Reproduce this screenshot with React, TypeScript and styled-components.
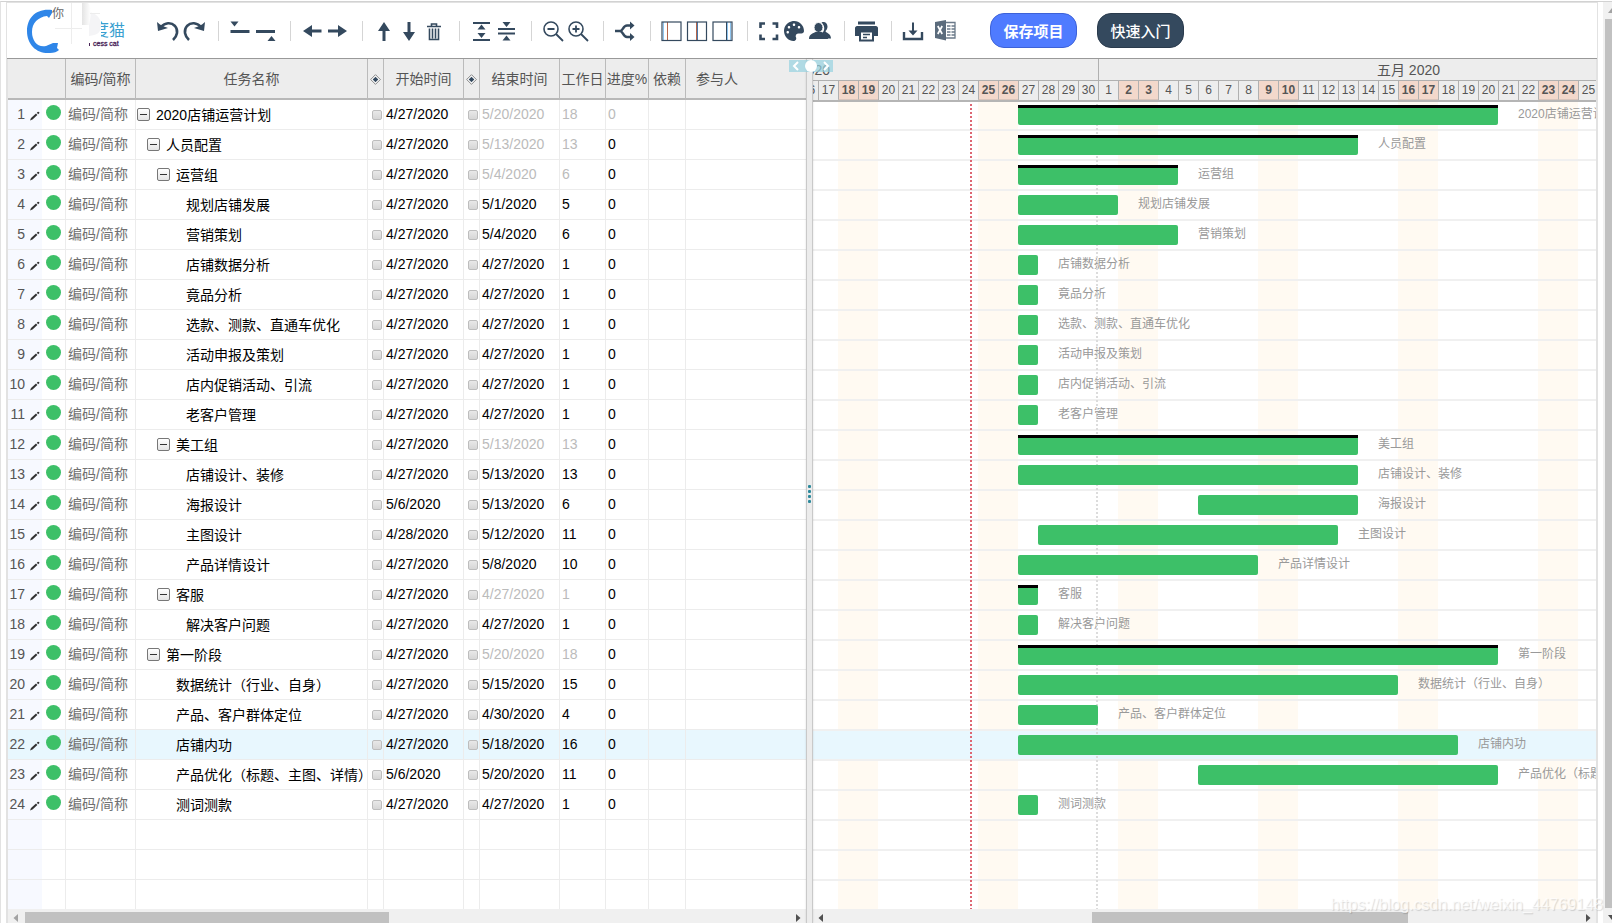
import React from "react";
import styled, { createGlobalStyle, css } from "styled-components";
import { FaPalette } from "react-icons/fa";

const INK = "#34495e";
const GREEN = "#3dc068";
const DAY = 20;
const ROW = 30;

const GlobalStyle = createGlobalStyle`
  *, *::before, *::after { box-sizing: border-box; }
  html { overflow: hidden; }
  body {
    margin: 0;
    background: #fff;
    color: #000;
    font-family: "Liberation Sans", "Noto Sans CJK SC", sans-serif;
    font-size: 14px;
  }
  button { font: inherit; padding: 0; border: 0; background: none; cursor: pointer; }
`;

/* ---------- data ---------- */

type Task = {
  name: string;
  level: number;
  group?: boolean;
  start: string;
  end: string;
  days: number;
  locked?: boolean;
};

const tasks: Task[] = [
  { name: "2020店铺运营计划", level: 0, group: true, start: "4/27", end: "5/20", days: 18, locked: true },
  { name: "人员配置", level: 1, group: true, start: "4/27", end: "5/13", days: 13 },
  { name: "运营组", level: 2, group: true, start: "4/27", end: "5/4", days: 6 },
  { name: "规划店铺发展", level: 3, start: "4/27", end: "5/1", days: 5 },
  { name: "营销策划", level: 3, start: "4/27", end: "5/4", days: 6 },
  { name: "店铺数据分析", level: 3, start: "4/27", end: "4/27", days: 1 },
  { name: "竟品分析", level: 3, start: "4/27", end: "4/27", days: 1 },
  { name: "选款、测款、直通车优化", level: 3, start: "4/27", end: "4/27", days: 1 },
  { name: "活动申报及策划", level: 3, start: "4/27", end: "4/27", days: 1 },
  { name: "店内促销活动、引流", level: 3, start: "4/27", end: "4/27", days: 1 },
  { name: "老客户管理", level: 3, start: "4/27", end: "4/27", days: 1 },
  { name: "美工组", level: 2, group: true, start: "4/27", end: "5/13", days: 13 },
  { name: "店铺设计、装修", level: 3, start: "4/27", end: "5/13", days: 13 },
  { name: "海报设计", level: 3, start: "5/6", end: "5/13", days: 6 },
  { name: "主图设计", level: 3, start: "4/28", end: "5/12", days: 11 },
  { name: "产品详情设计", level: 3, start: "4/27", end: "5/8", days: 10 },
  { name: "客服", level: 2, group: true, start: "4/27", end: "4/27", days: 1 },
  { name: "解决客户问题", level: 3, start: "4/27", end: "4/27", days: 1 },
  { name: "第一阶段", level: 1, group: true, start: "4/27", end: "5/20", days: 18 },
  { name: "数据统计（行业、自身）", level: 2, start: "4/27", end: "5/15", days: 15 },
  { name: "产品、客户群体定位", level: 2, start: "4/27", end: "4/30", days: 4 },
  { name: "店铺内功", level: 2, start: "4/27", end: "5/18", days: 16 },
  { name: "产品优化（标题、主图、详情）", level: 2, start: "5/6", end: "5/20", days: 11 },
  { name: "测词测款", level: 2, start: "4/27", end: "4/27", days: 1 },
];

const SELECTED = 21;
const BLANK_ROWS = 3;

/* the timeline runs from April 16th to May 31st */
const FIRST_DAY = 16;
const APRIL_DAYS = 30 - FIRST_DAY + 1;
const TOTAL_DAYS = APRIL_DAYS + 31;

const column = (date: string) => {
  const [month, day] = date.split("/").map(Number);
  return month === 4 ? day - FIRST_DAY + 1 : day + APRIL_DAYS;
};

const timeline = Array.from({ length: TOTAL_DAYS }, (_, i) => ({
  day: i < APRIL_DAYS ? i + FIRST_DAY : i - APRIL_DAYS + 1,
  weekend: i % 7 === 2 || i % 7 === 3,
}));

/* ---------- page ---------- */

const Page = styled.div`
  display: flex;
  margin-top: 1px;
  border-top: 1px solid #d2d2d2;
  border-left: 1px solid #e2e2e2;
  min-height: calc(100vh - 1px);
`;

const Frame = styled.main`
  flex: 1;
  min-width: 0;
  margin: 0 5px;
  border: 1px solid #e2e2e2;
  border-bottom: 0;
  display: flex;
  flex-direction: column;
`;

const PageScroll = styled.div`
  width: 9px;
  display: flex;
  flex-direction: column;
  background: #f1f1f1;
`;

const PageThumb = styled.div`
  flex: 1;
  margin-left: 2px;
  background: #c1c1c1;
`;

const Arrow = styled.svg<{ $muted?: boolean }>`
  display: block;
  flex: none;
  fill: ${(p) => (p.$muted ? "#a3a3a3" : "#505050")};
`;

/* ---------- toolbar ---------- */

const Toolbar = styled.header`
  display: flex;
  align-items: center;
  height: 56px;
  border-bottom: 1px solid #999;
`;

const Logo = styled.a`
  display: block;
  width: 130px;
  height: 55px;
  margin-right: 19px;
`;

const Tool = styled.button`
  width: 25px;
  height: 25px;
  color: ${INK};
  svg { display: block; }
`;

const Rule = styled.span`
  width: 1px;
  height: 20px;
  margin: 0 9px 0 12px;
  background: #d5d5d5;
`;

const Spacer = styled.span`
  width: 7px;
`;

const Action = styled.button<{ $primary?: boolean }>`
  width: 87px;
  height: 35px;
  padding-bottom: 1px;
  border-radius: 14px;
  color: #fff;
  font-size: 15px;
  font-weight: ${(p) => (p.$primary ? 700 : 500)};
  background: ${(p) => (p.$primary ? "#4f7bff" : INK)};
  border: 1px solid ${(p) => (p.$primary ? "#3d62d8" : "#2a3b4d")};
  margin-left: ${(p) => (p.$primary ? 32 : 20)}px;
`;

/* ---------- task table ---------- */

const Workspace = styled.div`
  flex: 1;
  display: flex;
  border: solid #e2e2e2;
  border-width: 0 1px;
`;

const TablePane = styled.section`
  flex: 0 0 798px;
  display: flex;
  flex-direction: column;
`;

const Table = styled.table`
  width: 100%;
  table-layout: fixed;
  border-collapse: separate;
  border-spacing: 0;
`;

const Head = styled.th<{ $left?: boolean }>`
  height: 41px;
  padding: 0 0 2px ${(p) => (p.$left ? 10 : 0)}px;
  text-align: ${(p) => (p.$left ? "left" : "center")};
  white-space: nowrap;
  font-weight: 400;
  color: #555;
  background: #ededed;
  border-right: 1px solid #bbb;
  border-bottom: 2px solid #b8b8b8;
  &:last-child { border-right: 0; }
  svg { display: block; margin: 4px auto 0 2px; }
`;

const TaskRow = styled.tr<{ $selected?: boolean }>`
  background: ${(p) => (p.$selected ? "#e8f7fe" : "#fff")};
  &:last-child td { height: 29px; border-bottom: 0; }
`;

const Cell = styled.td<{ $tone?: "muted" | "code" }>`
  height: ${ROW}px;
  padding: 0 0 2px 2px;
  line-height: 20px;
  white-space: nowrap;
  color: ${(p) => (p.$tone === "muted" ? "#bbb" : p.$tone === "code" ? "#707070" : "#000")};
  border-right: 1px solid #ececec;
  border-bottom: 1px solid #ececec;
  &:last-child { border-right: 0; }
`;

const IndexCell = styled(Cell)<{ $selected?: boolean }>`
  padding: 0;
  color: #555;
  background: ${(p) => (p.$selected ? "transparent" : "linear-gradient(90deg, #f7f9ff 34px, transparent 34px)")};
`;

const NameCell = styled(Cell)`
  padding: 0 0 0 1px;
`;

const TickCell = styled(Cell)`
  padding: 0 0 0 4px;
`;

const IndexLine = styled.div`
  display: flex;
  align-items: center;
  height: 28px;
  padding-bottom: 2px;
`;

const RowNumber = styled.span`
  width: 17px;
  text-align: right;
`;

const EditButton = styled.button`
  width: 10px;
  height: 10px;
  margin: 4px 6px 0 5px;
  svg { display: block; }
`;

const Status = styled.span`
  width: 15px;
  height: 15px;
  margin-bottom: 2px;
  border-radius: 50%;
  background: ${GREEN};
`;

const NameLine = styled.div<{ $indent: number }>`
  display: flex;
  align-items: center;
  gap: 6px;
  height: 28px;
  padding-left: ${(p) => p.$indent}px;
`;

const Toggle = styled.button`
  width: 13px;
  height: 13px;
  flex: none;
  display: flex;
  align-items: center;
  justify-content: center;
  border: 1px solid #777;
  border-radius: 2px;
  background: linear-gradient(#fff, #e4e4e4);
  &::after {
    content: "";
    width: 7px;
    height: 1px;
    background: #333;
  }
`;

const Tick = styled.input`
  appearance: none;
  display: block;
  width: 10px;
  height: 10px;
  margin: 0;
  border: 1px solid #bdbdbd;
  border-radius: 2px;
  background: linear-gradient(#e8e8e8, #d6d6d6);
`;

const ScrollTrack = styled.div`
  display: flex;
  height: 14px;
  margin-top: auto;
  background: #f0f0f0;
  padding-top: 3px;
`;

const ScrollThumb = styled.div<{ $size: number }>`
  flex: ${(p) => p.$size} 1 0;
  background: #c1c1c1;
`;

const ScrollGap = styled.div<{ $size: number }>`
  flex: ${(p) => p.$size} 1 0;
`;

/* ---------- splitter ---------- */

const Splitter = styled.div`
  position: relative;
  z-index: 3;
  flex: 0 0 7px;
  display: flex;
  align-items: center;
  justify-content: center;
  background: #ececec;
  border: solid #c9c9c9;
  border-width: 0 1px;
  box-shadow: 0 0 2px rgba(0, 0, 0, 0.15);
`;

const Grip = styled.div`
  display: grid;
  gap: 2px;
  padding-top: 6px;
  span {
    width: 3px;
    height: 3px;
    border-radius: 1px;
    background: #2c8a9c;
  }
`;

const PaneSwitch = styled.div`
  position: absolute;
  top: 1px;
  left: 50%;
  width: 44px;
  height: 12px;
  margin-left: -21px;
  display: flex;
  align-items: center;
  justify-content: space-between;
  background: rgba(150, 210, 224, 0.7);
  button { width: 14px; height: 12px; }
  svg { display: block; margin: auto; }
  i {
    width: 12px;
    height: 12px;
    border-radius: 50%;
    background: #fff;
  }
`;

/* ---------- gantt chart ---------- */

const ChartPane = styled.section`
  flex: 1;
  min-width: 0;
  display: flex;
  flex-direction: column;
  overflow: hidden;
`;

/* the chart is scrolled most of a day past April 16th */
const Scrolled = styled.div`
  width: ${TOTAL_DAYS * DAY}px;
  margin-left: -15px;
`;

const ChartHead = styled.div`
  position: relative;
  z-index: 1;
  background: #ededed;
  color: #555;
  border-bottom: 1px solid #b5b5b5;
  box-shadow: 0 1px 0 #b5b5b5;
`;

const Months = styled.div`
  display: grid;
  grid-template-columns: ${APRIL_DAYS * DAY}px ${31 * DAY}px;
  height: 22px;
  line-height: 22px;
  text-align: center;
  border-bottom: 1px solid #b0b0b0;
`;

const Month = styled.span<{ $centredOnStart?: boolean }>`
  border-left: 1px solid #b0b0b0;
  ${(p) =>
    p.$centredOnStart &&
    css`
      text-align: left;
      text-indent: -32px;
    `}
`;

const Days = styled.div`
  display: grid;
  grid-template-columns: repeat(${TOTAL_DAYS}, ${DAY}px);
  height: 19px;
`;

const Day = styled.span<{ $weekend: boolean }>`
  font-size: 12px;
  line-height: 18px;
  text-align: center;
  border-left: 1px solid #b0b0b0;
  ${(p) =>
    p.$weekend &&
    css`
      font-weight: 700;
      background: #f3d8cb;
      border-bottom: 1px solid #d8c4bb;
    `}
`;

const ChartBody = styled.div`
  position: relative;
  background: repeating-linear-gradient(
    90deg,
    transparent 0 40px,
    #fffaf2 40px 80px,
    transparent 80px 140px
  );
`;

const Marker = styled.div<{ $left: number; $color: string }>`
  position: absolute;
  top: 3px;
  bottom: 0;
  left: ${(p) => p.$left}px;
  width: 2px;
  background: repeating-linear-gradient(${(p) => p.$color} 0 2px, transparent 2px 4px);
`;

const ChartRow = styled.div<{ $selected?: boolean }>`
  display: grid;
  grid-template-columns: repeat(${TOTAL_DAYS}, ${DAY}px);
  align-items: start;
  height: ${ROW}px;
  padding-top: 4px;
  border-bottom: 2px solid #f0f0f0;
  background: ${(p) => (p.$selected ? "#e8f7fe" : "transparent")};
  &:last-child { height: 28px; border-bottom: 0; }
`;

const Bar = styled.div<{ $from: number; $to: number; $group?: boolean }>`
  position: relative;
  grid-row: 1;
  grid-column: ${(p) => p.$from} / ${(p) => p.$to + 1};
  height: 20px;
  border-radius: 2px;
  background: ${GREEN};
  ${(p) =>
    p.$group &&
    css`
      border-top: 3px solid #000;
      border-radius: 0 0 2px 2px;
    `}
`;

const BarLabel = styled.span<{ $from: number }>`
  grid-row: 1;
  grid-column: ${(p) => p.$from} / span 1;
  font-size: 12px;
  line-height: 18px;
  white-space: nowrap;
  color: #999;
`;

const Watermark = styled.div`
  position: absolute;
  z-index: 4;
  right: 9px;
  top: 895px;
  font-size: 16px;
  line-height: 20px;
  color: rgba(255, 255, 255, 0.7);
  text-shadow: 1px 1px 1px rgba(0, 0, 0, 0.15);
  pointer-events: none;
`;

/* ---------- icons ---------- */

const Icon = ({ children }: { children: React.ReactNode }) => (
  <svg width="25" height="25" viewBox="0 0 25 25" fill="currentColor" aria-hidden="true">
    {children}
  </svg>
);

const line = { fill: "none", stroke: "currentColor", strokeWidth: 2 };

const icons: Record<string, React.ReactNode> = {
  撤销: (
    <>
      <path d="M1 4l1 9 10-3-4-1.500-4-2z" />
      <path d="M5 9C9 4.500 15 3.800 19 8C22.500 12 21.500 18 17 22" {...line} strokeWidth="2.600" />
    </>
  ),
  重做: (
    <>
      <path d="M24 4l-1 9-10-3 4-1.500 4-2z" />
      <path d="M20 9C16 4.500 10 3.800 6 8C2.500 12 3.500 18 8 22" {...line} strokeWidth="2.600" />
    </>
  ),
  上方插入: (
    <>
      <path d="M2.500 3.500h8l-4 5z" />
      <path d="M2.500 12h19v3h-19z" />
    </>
  ),
  下方插入: (
    <>
      <path d="M3 12h19v3H3z" />
      <path d="M14.500 23h8l-4-5z" />
    </>
  ),
  升级: <path d="M3 13l9-6v4.500h9.500v3H12V19z" />,
  降级: <path d="M22 13l-9-6v4.500H3v3h10V19z" />,
  上移: <path d="M12 4l6 9h-4.500v10h-3V13H6z" />,
  下移: <path d="M12 23l6-9h-4.500V4h-3v10H6z" />,
  删除: (
    <path
      d="M5 8.500h14M9.500 8.500V6h5v2.500M7.500 10.500v11h9v-11M10.500 10.500v10M13.500 10.500v10"
      {...line}
      strokeWidth="1.600"
    />
  ),
  全部展开: (
    <>
      <path d="M4 4h17v2H4zM4 21h17v2H4z" />
      <path d="M12.500 6.500l4 5h-8zM12.500 20l4-5h-8z" />
    </>
  ),
  全部收起: (
    <>
      <path d="M4 10h17v2H4zM4 14.500h17v2H4z" />
      <path d="M12.500 9l4-5h-8zM12.500 17.500l4 5h-8z" />
    </>
  ),
  缩小: (
    <>
      <circle cx="10" cy="11" r="7" {...line} strokeWidth="1.600" />
      <path d="M15 16l7 7M6.500 11h7" {...line} strokeWidth="1.800" />
    </>
  ),
  放大: (
    <>
      <circle cx="10" cy="11" r="7" {...line} strokeWidth="1.600" />
      <path d="M15 16l7 7M6.500 11h7M10 7.500v7" {...line} strokeWidth="1.800" />
    </>
  ),
  关键路径: (
    <>
      <path d="M2 13h5c3 0 3-5.500 7-5.500h4M7 13c3 0 3 6 7 6h4" {...line} strokeWidth="2.500" />
      <path d="M17 3.500l4.500 4-4.500 4zM17 15l4.500 4-4.500 4z" />
    </>
  ),
  左栏: (
    <>
      <path d="M7.500 4v18" stroke="#b5654a" strokeWidth="1" />
      <path d="M3.500 4v18" stroke="#8fc4ee" strokeWidth="1" />
      <rect x="2" y="4" width="19" height="18.500" {...line} strokeWidth="1.200" />
    </>
  ),
  中栏: (
    <>
      <path d="M11.500 4v18" stroke="#b5654a" strokeWidth="1" />
      <path d="M12.500 4v18" stroke="#4a78a8" strokeWidth="1" />
      <rect x="2.500" y="4" width="19" height="18.500" {...line} strokeWidth="1.200" />
    </>
  ),
  右栏: (
    <>
      <path d="M16.500 4v18" stroke={INK} strokeWidth="1" />
      <path d="M17.500 4v18M20.500 4v18" stroke="#8fc4ee" strokeWidth="1" />
      <rect x="3" y="4" width="19" height="18.500" {...line} strokeWidth="1.200" />
    </>
  ),
  全屏: <path d="M3.500 10V5.500H8M15.500 5.500H20V10M20 16.500V21h-4.500M8 21H3.500v-4.500" {...line} strokeWidth="2.600" />,
  颜色: <FaPalette x="2" y="3" size={20} />,
  成员: (
    <>
      <path d="M14.500 4.500c3-1.500 6 .5 6 4 0 2-1 3.500-2 4.500 0 2 5.500 2 5.500 7.500h-3.500c-1-3-2.500-4.500-5-5.500 2.500-3 2.500-7-1-10.500z" />
      <ellipse cx="11.500" cy="9.500" rx="4.500" ry="5" stroke="#fff" />
      <path d="M2 21c0-5 4-5.500 6.500-7h6c3 1.500 6.500 2 6.500 7z" />
    </>
  ),
  打印: (
    <>
      <path d="M4 3.500h17v3H4zM3 8h19c1 0 2 1 2 2v8h-4v-4H5v4H1v-8c0-1 1-2 2-2z" />
      <path d="M6 13.500h13v9H6z" {...line} />
      <path d="M9 16.500h7M9 19.500h4" {...line} strokeWidth="1.500" />
    </>
  ),
  导出: (
    <>
      <path d="M3 14v7h18v-7" {...line} strokeWidth="2.400" />
      <path d="M11 4.500h2v8h3.500L12 17.500 7.500 12.500H11z" />
    </>
  ),
};

const toolGroups = [
  ["撤销", "重做"],
  ["上方插入", "下方插入"],
  ["升级", "降级"],
  ["上移", "下移", "删除"],
  ["全部展开", "全部收起"],
  ["缩小", "放大"],
  ["关键路径"],
  ["左栏", "中栏", "右栏"],
  ["全屏", "颜色", "成员"],
  ["打印"],
  ["导出"],
];

const ExcelIcon = () => (
  <svg width="25" height="25" viewBox="0 0 25 25" aria-hidden="true">
    <path d="M2 4l11-2v20.500L2 20z" fill="#5b6b7c" />
    <path d="M4.800 8l4.400 8M9.200 8l-4.400 8" stroke="#fff" strokeWidth="1.700" fill="none" />
    <path
      d="M13 4.500h9v15.500h-9M14 8h3.500M18.500 8h3M14 11h3.500M18.500 11h3M14 14h3.500M18.500 14h3M14 17h3.500M18.500 17h3"
      stroke="#6b7a89"
      strokeWidth="1.300"
      fill="none"
    />
  </svg>
);

const Milestone = () => (
  <svg width="11" height="11" viewBox="0 0 11 11" aria-hidden="true">
    <path d="M5.500 0.700l4.800 4.800-4.800 4.800L0.700 5.500z" fill="#fff" stroke="#777" strokeWidth="0.900" />
    <path d="M5.500 2.700l2.800 2.800-2.800 2.800-2.800-2.800z" fill={INK} />
  </svg>
);

const Pencil = () => (
  <svg width="10" height="10" viewBox="0 0 10 10" aria-hidden="true">
    <path d="M0 9.500l1-2.500 5-4.500 1.400 1.500L2.500 8.500zM6.800 1.800L8 .8c.5-.4 1.800.7 1.400 1.200L8.200 3.300z" fill="#333" />
  </svg>
);

const LogoArt = () => (
  <svg width="130" height="55" viewBox="7 3 130 55" role="img" aria-label="进度猫">
    <defs>
      <linearGradient id="veil" x1="0" x2="1">
        <stop offset="0" stopColor="#e4e4e4" />
        <stop offset="1" stopColor="#fff" />
      </linearGradient>
    </defs>
    <path
      d="M52 10C36 8 27 18 27 31C27 45 37 54 50 53C54 53 57 52 59 50L57 48L58 43L53 43L46 46C38 48 32 41 32 32C32 23 38 17 47 16L49 18L52 13z"
      fill="#2f86e8"
    />
    <text x="92" y="36" fontSize="17" fill="#3a9fd0">度</text>
    <path d="M84 16h17v26H84z" fill="#fff" />
    <path d="M89 12c6 1 12 5 12 13s-4 10-12 11z" fill="#f4f4f6" />
    <path d="M82 3h6c4 3 3 14 1 22h-7z" fill="url(#veil)" />
    <path d="M71.500 3v41M55 28.500h27M90 13.500h10" stroke="#ededed" fill="none" />
    <text x="109" y="36" fontSize="16" fill="#3a9fd0">猫</text>
    <text x="93" y="46" fontSize="7" fill="#4a2558" stroke="#4a2558" strokeWidth="0.300">cess cat</text>
    <path d="M89.500 43v3" stroke="#4a2558" strokeWidth="1" />
    <text x="52" y="18" fontSize="12" fill="#666">你</text>
  </svg>
);

const Left = ({ muted }: { muted?: boolean }) => (
  <Arrow $muted={muted} width="17" height="11" viewBox="0 0 17 11">
    <path d="M10 2v8L5.500 6z" />
  </Arrow>
);

const Right = () => (
  <Arrow width="17" height="11" viewBox="0 0 17 11">
    <path d="M7 2v8l4.500-4z" />
  </Arrow>
);

/* ---------- parts ---------- */

const TaskTable = () => (
  <Table>
    <colgroup>
      {[58, 70, 232, 16, 80, 16, 80, 46, 43, 37].map((w, i) => (
        <col key={i} width={w} />
      ))}
      <col />
    </colgroup>
    <thead>
      <tr>
        <Head aria-label="序号" />
        <Head>编码/简称</Head>
        <Head>任务名称</Head>
        <Head aria-label="开始里程碑"><Milestone /></Head>
        <Head>开始时间</Head>
        <Head aria-label="结束里程碑"><Milestone /></Head>
        <Head>结束时间</Head>
        <Head>工作日</Head>
        <Head>进度%</Head>
        <Head>依赖</Head>
        <Head $left>参与人</Head>
      </tr>
    </thead>
    <tbody>
      {tasks.map((t, i) => (
        <TaskRow key={i} $selected={i === SELECTED}>
          <IndexCell $selected={i === SELECTED}>
            <IndexLine>
              <RowNumber>{i + 1}</RowNumber>
              <EditButton aria-label={`编辑 ${t.name}`}><Pencil /></EditButton>
              <Status />
            </IndexLine>
          </IndexCell>
          <Cell $tone="code">编码/简称</Cell>
          <NameCell>
            <NameLine $indent={t.level * 10 + (t.group ? 0 : 19)}>
              {t.group && <Toggle aria-label={`收起 ${t.name}`} />}
              <span>{t.name}</span>
            </NameLine>
          </NameCell>
          <TickCell><Tick type="checkbox" aria-label={`${t.name} 开始里程碑`} /></TickCell>
          <Cell>{t.start}/2020</Cell>
          <TickCell><Tick type="checkbox" aria-label={`${t.name} 结束里程碑`} /></TickCell>
          <Cell $tone={t.group ? "muted" : undefined}>{t.end}/2020</Cell>
          <Cell $tone={t.group ? "muted" : undefined}>{t.days}</Cell>
          <Cell $tone={t.locked ? "muted" : undefined}>0</Cell>
          <Cell />
          <Cell />
        </TaskRow>
      ))}
      {Array.from({ length: BLANK_ROWS }, (_, i) => (
        <TaskRow key={`blank-${i}`}>
          <IndexCell />
          {Array.from({ length: 10 }, (_, c) => <Cell key={c} />)}
        </TaskRow>
      ))}
    </tbody>
  </Table>
);

const Chart = () => (
  <Scrolled>
    <ChartHead>
      <Months>
        <Month $centredOnStart>四月 2020</Month>
        <Month>五月 2020</Month>
      </Months>
      <Days>
        {timeline.map((d, i) => (
          <Day key={i} $weekend={d.weekend}>{d.day}</Day>
        ))}
      </Days>
    </ChartHead>
    <ChartBody>
      <Marker $left={298} $color="#dcdcdc" />
      <Marker $left={172} $color="#dd6672" />
      {tasks.map((t, i) => (
        <ChartRow key={i} $selected={i === SELECTED}>
          <Bar $from={column(t.start)} $to={column(t.end)} $group={t.group} />
          <BarLabel $from={column(t.end) + 2}>{t.name}</BarLabel>
        </ChartRow>
      ))}
      {Array.from({ length: BLANK_ROWS }, (_, i) => <ChartRow key={`blank-${i}`} />)}
    </ChartBody>
  </Scrolled>
);

export default function App() {
  return (
    <>
      <GlobalStyle />
      <Page>
        <Frame>
          <Toolbar>
            <Logo href="#"><LogoArt /></Logo>
            {toolGroups.map((group, g) => (
              <React.Fragment key={g}>
                {g > 0 && <Rule />}
                {group.map((name) => (
                  <Tool key={name} aria-label={name}><Icon>{icons[name]}</Icon></Tool>
                ))}
              </React.Fragment>
            ))}
            <Spacer />
            <Tool aria-label="导出 Excel"><ExcelIcon /></Tool>
            <Action $primary>保存项目</Action>
            <Action>快速入门</Action>
          </Toolbar>
          <Workspace>
            <TablePane>
              <TaskTable />
              <ScrollTrack>
                <Left muted />
                <ScrollThumb $size={364} />
                <ScrollGap $size={400} />
                <Right />
              </ScrollTrack>
            </TablePane>
            <Splitter>
              <Grip><span /><span /><span /><span /></Grip>
              <PaneSwitch>
                <button aria-label="收起表格">
                  <svg width="8" height="10" viewBox="0 0 8 10"><path d="M6 1L2 5l4 4" fill="none" stroke="#fff" strokeWidth="2" /></svg>
                </button>
                <i />
                <button aria-label="收起图表">
                  <svg width="8" height="10" viewBox="0 0 8 10"><path d="M2 1l4 4-4 4" fill="none" stroke="#fff" strokeWidth="2" /></svg>
                </button>
              </PaneSwitch>
            </Splitter>
            <ChartPane>
              <Chart />
              <ScrollTrack>
                <Left />
                <ScrollGap $size={262} />
                <ScrollThumb $size={316} />
                <ScrollGap $size={171} />
                <Right />
              </ScrollTrack>
            </ChartPane>
          </Workspace>
        </Frame>
        <PageScroll>
          <Arrow $muted width="9" height="17" viewBox="0 0 9 17"><path d="M5 11h8L9 6z" /></Arrow>
          <PageThumb />
          <Arrow width="9" height="15" viewBox="0 0 9 15"><path d="M5 7h8l-4 5z" /></Arrow>
        </PageScroll>
      </Page>
      <Watermark>https://blog.csdn.net/weixin_44769148</Watermark>
    </>
  );
}
